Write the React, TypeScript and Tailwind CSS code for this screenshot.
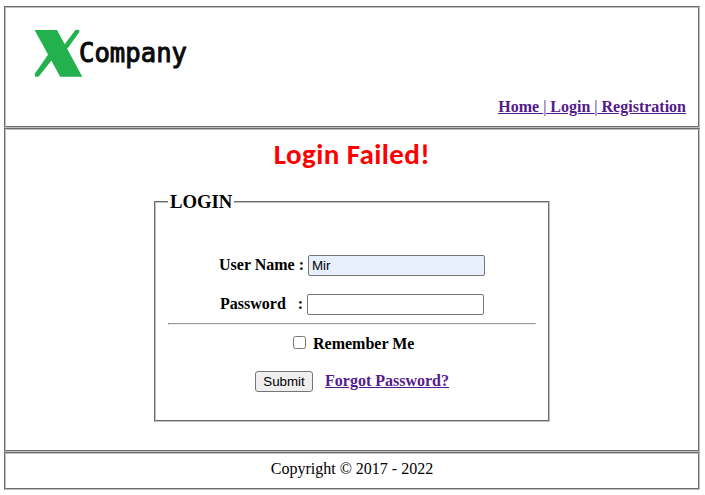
const link = "text-[#551a8b] underline font-bold";

function Logo() {
  return (
    <svg width="160" height="56" viewBox="32 26 160 56" className="block" aria-label="X Company">
      <path d="M75.6 29.8 L79.2 30 L79.4 32 L67.5 48.5 L63 46.5 Z" fill="#22b14c" />
      <path d="M48.5 54 L51.8 60 L38.8 76.4 L35 76.8 L34.8 73.8 Z" fill="#22b14c" />
      <path d="M34.6 30 H57 L82.3 76.8 H60.2 Z" fill="#22b14c" />
      <text
        x="79"
        y="62.3"
        textLength="108"
        lengthAdjust="spacingAndGlyphs"
        fontFamily="'DejaVu Sans Mono', monospace"
        fontSize="26"
        fill="#0a0a0a"
        stroke="#0a0a0a"
        strokeWidth="1"
      >
        Company
      </text>
    </svg>
  );
}

const panel = "border-2 [border-style:groove] border-[#c0c0c0]";
const field =
  "block h-[21px] w-[177px] rounded-[2px] border border-[#767676] px-[3px] font-['Liberation_Sans',Arial,sans-serif] text-[13.333px] font-normal leading-[19px] text-black outline-none";

export default function App() {
  return (
    <div className="h-[495px] w-[705px] overflow-hidden bg-white pl-1 pt-1.5 font-['Liberation_Serif','Times_New_Roman',serif] text-base leading-[18px] text-black">
      <div className="w-[696px]">
        <header className={`${panel} flex h-[122px] flex-col justify-between pb-[10px] pl-[26px] pr-3 pt-[18px]`}>
          <Logo />
          <nav className={`${link} self-end whitespace-pre`}>
            <a href="#">Home </a>
            <span className="font-normal">|</span>
            <a href="#"> Login </a>
            <span className="font-normal">|</span>
            <a href="#"> Registration</a>
          </nav>
        </header>

        <main className={`${panel} flex h-[324px] flex-col items-center`}>
          <h1 className="mt-[6px] h-[36px] whitespace-nowrap font-['Carlito','Lato',sans-serif] text-[29px] font-bold leading-[36px] tracking-[0.4px] text-[#ff0000]">
            Login Failed!
          </h1>
          <fieldset className={`${panel} mt-5 h-[230px] w-[396px] px-3`}>
            <legend className="px-0.5 text-[18.72px] font-bold leading-[20px]">LOGIN</legend>
            <div className="flex flex-col font-bold">
              <label className="mt-[43px] flex h-[21px] items-center pl-[51px]">
                <span className="w-[89px] whitespace-pre pb-0.5">User Name :</span>
                <input className={`${field} bg-[#e8f0fe]`} defaultValue="Mir" />
              </label>
              <label className="mt-[18px] flex h-[21px] items-center pl-[52px]">
                <span className="w-[87px] whitespace-pre pb-0.5">Password   :</span>
                <input type="password" className={`${field} bg-white`} />
              </label>
              <hr className="mt-2 h-0.5 border border-b-[#eeeeee] border-l-[#9a9a9a] border-r-[#eeeeee] border-t-[#9a9a9a]" />
              <label className="mt-[10px] flex h-[18px] items-center pl-[125px]">
                <input
                  type="checkbox"
                  className="mb-[3px] mr-[7px] h-[13px] w-[13px] appearance-none rounded-[2.5px] border border-[#767676] bg-white"
                />
                Remember Me
              </label>
              <div className="mt-[18px] flex h-[21px] items-center pl-[87px]">
                <button className="h-[21px] w-[58px] rounded-[3px] border border-[#767676] bg-[#efefef] font-['Liberation_Sans',Arial,sans-serif] text-[13.333px] font-normal leading-[19px]">
                  Submit
                </button>
                <a href="#" className={`${link} ml-3 pb-0.5`}>
                  Forgot Password?
                </a>
              </div>
            </div>
          </fieldset>
        </main>

        <footer className={`${panel} flex h-[38px] items-center justify-center pb-1`}>
          Copyright © 2017 - 2022
        </footer>
      </div>
    </div>
  );
}
